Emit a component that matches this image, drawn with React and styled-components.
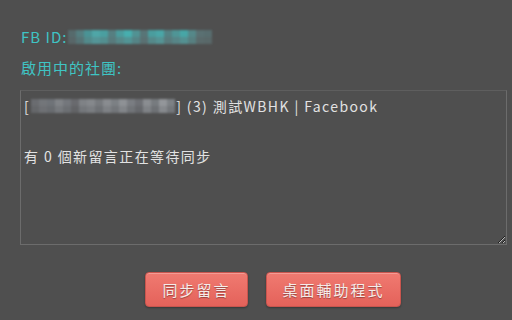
import React from 'react';
import styled, { createGlobalStyle } from 'styled-components';

const GlobalStyle = createGlobalStyle`
  html, body {
    margin: 0;
    background: #4f4f4f;
  }
  body {
    font-family: "Noto Sans CJK TC", "Noto Sans", sans-serif;
  }
`;

// blurred pixel blocks standing in for hidden ids
const idCells = [
  ['#566a6c', '#557e80', '#4a9395', '#4fa6a7', '#4a9fa0', '#567f81', '#4b9c9d', '#47aeae', '#519293', '#587577', '#4a9d9e', '#4aa6a7', '#548284', '#4f9596', '#47a6a6', '#558889', '#5a7072', '#586d6f'],
  ['#586668', '#567476', '#528a8b', '#549597', '#538f90', '#587a7c', '#56898a', '#529495', '#558486', '#5a7072', '#55898a', '#559394', '#587a7c', '#578587', '#549091', '#577f80', '#5a6a6b', '#596869'],
];

const nameCells = [
  ['#6a6c70', '#73767a', '#6f7378', '#808387', '#74777c', '#696a6e', '#7f8286', '#85888c', '#777a7e', '#898c90', '#7c8084', '#8e9195', '#7a7d82', '#6e7075', '#8a8d91', '#777b7f', '#93969a', '#7d8185'],
  ['#65676a', '#6e7074', '#696c70', '#76797d', '#6c6f73', '#626366', '#74777b', '#7a7d81', '#6e7175', '#7e8185', '#73767a', '#828589', '#717478', '#66686c', '#7f8286', '#6e7175', '#86898d', '#74777b'],
];

const Mosaic = ({ rows, cell }) => (
  <StyledMosaic $cols={rows[0].length} $cell={cell}>
    {rows.flat().map((c, i) => (
      <span key={i} style={{ background: c }} />
    ))}
  </StyledMosaic>
);

const App = () => {
  return (
    <StyledPage>
      <GlobalStyle />
      <StyledLabel>
        FB ID:
        <Mosaic rows={idCells} cell={8} />
      </StyledLabel>
      <StyledLabel $top={13}>啟用中的社團:</StyledLabel>
      <StyledBox>
        <StyledLine>
          [<Mosaic rows={nameCells} cell={8} />] (3) 測試WBHK | Facebook
        </StyledLine>
        <StyledLine>&nbsp;</StyledLine>
        <StyledLine>有 0 個新留言正在等待同步</StyledLine>
      </StyledBox>
      <StyledActions>
        <StyledButton $width={103}>同步留言</StyledButton>
        <StyledButton $width={135}>桌面輔助程式</StyledButton>
      </StyledActions>
    </StyledPage>
  );
};

const StyledPage = styled.div`
  width: 512px;
  height: 320px;
  box-sizing: border-box;
  padding: 28px 5px 0 20px;
  overflow: hidden;
`;

const StyledLabel = styled.div`
  display: flex;
  align-items: center;
  margin-top: ${(p) => p.$top || 0}px;
  padding-left: 1px;
  height: 18px;
  color: #3fc4c4;
  font-size: 15px;
  letter-spacing: 1px;
  line-height: 18px;
`;

const StyledMosaic = styled.span`
  display: inline-grid;
  grid-template-columns: repeat(${(p) => p.$cols}, ${(p) => p.$cell}px);
  grid-auto-rows: 7px;
  margin: 0 1px 0 1px;
  filter: blur(0.8px);
  vertical-align: middle;
`;

const StyledBox = styled.div`
  margin-top: 13px;
  width: 487px;
  height: 155px;
  box-sizing: border-box;
  padding: 2px 3px;
  border: 1px solid #6c6c6c;
  border-top-color: #5e5e5e;
  color: #e2e2e2;
  font-size: 14px;
  letter-spacing: 1.4px;
  resize: both;
  overflow: auto;
`;

const StyledLine = styled.div`
  display: flex;
  align-items: center;
  height: 25px;
  white-space: pre;
`;

const StyledActions = styled.div`
  display: flex;
  gap: 18px;
  margin-top: 27px;
  padding-left: 125px;
`;

const StyledButton = styled.button`
  width: ${(p) => p.$width}px;
  height: 35px;
  border: 1px solid #c9554e;
  border-radius: 4px;
  background: linear-gradient(#f07a71, #e4625a);
  box-shadow: inset 0 1px 0 rgba(255, 255, 255, 0.25), 0 1px 2px rgba(0, 0, 0, 0.3);
  color: #f6ecea;
  font-family: "Noto Sans CJK TC", sans-serif;
  font-size: 15px;
  letter-spacing: 2px;
  text-shadow: 0 1px 1px rgba(0, 0, 0, 0.35);
  cursor: pointer;
`;

export default App;
